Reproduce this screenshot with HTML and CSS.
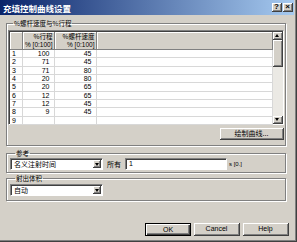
FILE: index.html
```html
<!DOCTYPE html>
<html lang="zh">

<head>
    <meta charset="UTF-8">
    <title>充填控制曲线设置</title>
    <link rel="stylesheet" href="styles.css">
</head>

<body>
    <div class="window">
        <div class="titlebar">
            <span class="title">充填控制曲线设置</span>
            <span class="tbtn">?</span>
            <span class="tbtn">×</span>
        </div>
        <div class="content">
            <fieldset class="group g1">
                <legend>%螺杆速度与%行程</legend>
                <div class="grid">
                    <table>
                        <colgroup>
                            <col class="c0">
                            <col class="c1">
                            <col class="c2">
                            <col>
                        </colgroup>
                        <tr>
                            <th></th>
                            <th><span class="h1">%行程</span><span class="h2">% [0:100]</span></th>
                            <th><span class="h1">%螺杆速度</span><span class="h2">% [0:100]</span></th>
                            <th></th>
                        </tr>
                        <tr><td>1</td><td>100</td><td>45</td><td></td></tr>
                        <tr><td>2</td><td>71</td><td>45</td><td></td></tr>
                        <tr><td>3</td><td>71</td><td>80</td><td></td></tr>
                        <tr><td>4</td><td>20</td><td>80</td><td></td></tr>
                        <tr><td>5</td><td>20</td><td>65</td><td></td></tr>
                        <tr><td>6</td><td>12</td><td>65</td><td></td></tr>
                        <tr><td>7</td><td>12</td><td>45</td><td></td></tr>
                        <tr><td>8</td><td>9</td><td>45</td><td></td></tr>
                        <tr><td>9</td><td></td><td></td><td></td></tr>
                    </table>
                    <div class="vscroll">
                        <span class="sbtn up"></span>
                        <span class="thumb"></span>
                        <span class="track"></span>
                        <span class="sbtn down"></span>
                    </div>
                </div>
                <div class="row-right">
                    <span class="btn draw">绘制曲线...</span>
                </div>
            </fieldset>

            <fieldset class="group g2">
                <legend>参考</legend>
                <div class="line">
                    <div class="combo"><span class="val">名义注射时间</span><span class="drop"></span></div>
                    <span class="lbl">所有</span>
                    <div class="input">1</div>
                    <span class="unit">s [0.]</span>
                </div>
            </fieldset>

            <fieldset class="group g3">
                <legend>射出体积</legend>
                <div class="line">
                    <div class="combo"><span class="val">自动</span><span class="drop"></span></div>
                </div>
            </fieldset>

            <div class="buttons">
                <span class="btn default">OK</span>
                <span class="btn">Cancel</span>
                <span class="btn">Help</span>
            </div>
        </div>
    </div>
</body>

</html>
```

FILE: styles.css
```css
* {
    padding: 0;
    margin: 0;
    box-sizing: border-box;
}

body {
    background-color: #d4d0c8;
    font-family: "Liberation Sans", "Noto Sans CJK SC", sans-serif;
    font-size: 7px;
    color: #000;
}

.window {
    width: 297px;
    height: 242px;
    background-color: #d4d0c8;
    border-right: 1px solid #404040;
    border-bottom: 1px solid #404040;
    box-shadow: inset -1px -1px 0 #808080;
}

.titlebar {
    display: flex;
    align-items: center;
    height: 15px;
    margin-right: 2px;
    padding: 0 1px 0 3px;
    background: linear-gradient(to right, #0a246a, #a6caf0);
}

.title {
    flex: 1;
    color: #fff;
    font-family: "Noto Sans CJK SC", sans-serif;
    font-weight: bold;
    font-size: 8.5px;
    line-height: 10px;
}

.tbtn {
    width: 10px;
    height: 9px;
    margin-left: 1px;
    background-color: #d4d0c8;
    border-right: 1px solid #404040;
    border-bottom: 1px solid #404040;
    box-shadow: inset 1px 1px 0 #fff, inset -1px -1px 0 #808080;
    font-size: 8px;
    font-weight: bold;
    line-height: 8px;
    text-align: center;
}

.content {
    padding: 4px 10px 0 6px;
}

.group {
    border: 1px solid #808080;
    box-shadow: 1px 1px 0 #fff, inset 1px 1px 0 #fff;
    font-family: "Noto Sans CJK SC", sans-serif;
}

.group legend {
    margin-left: 5px;
    padding: 0 1px;
    font-size: 6.5px;
    line-height: 8px;
}

.g1 {
    padding: 3px 1px 5px 1px;
}

.g2 {
    margin-top: 3px;
    padding: 1px 3px 2px 3px;
}

.g3 {
    margin-top: 1px;
    padding: 2px 3px 4px 3px;
}

/* 表格 */
.grid {
    display: flex;
    height: 95px;
    background-color: #fff;
    border-top: 1px solid #808080;
    border-left: 1px solid #808080;
    border-right: 1px solid #fff;
    border-bottom: 1px solid #fff;
    box-shadow: inset 1px 1px 0 #404040;
    padding: 1px 0 0 1px;
}

.grid table {
    flex: 1;
    align-self: flex-start;
    border-collapse: collapse;
    table-layout: fixed;
    font-family: "Liberation Sans", "Noto Sans CJK SC", sans-serif;
}

.c0 {
    width: 12px;
}

.c1 {
    width: 32px;
}

.c2 {
    width: 42px;
}

th {
    height: 17px;
    background-color: #d4d0c8;
    border-right: 1px solid #808080;
    border-bottom: 1px solid #808080;
    box-shadow: inset 1px 1px 0 #fff;
    font-weight: normal;
    text-align: right;
    white-space: nowrap;
    padding-right: 1px;
}

th span {
    display: block;
    height: 8.5px;
    line-height: 8.5px;
}

.h1 {
    font-family: "Noto Sans CJK SC", sans-serif;
    font-size: 6.5px;
}

.h2 {
    font-family: "Liberation Sans", sans-serif;
    font-size: 6.5px;
}

td {
    height: 8.33px;
    border-right: 1px solid #d8d8d8;
    border-bottom: 1px solid #d8d8d8;
    font-size: 7px;
    line-height: 7px;
    text-align: right;
    padding-right: 4px;
}

td:first-child {
    text-align: left;
    padding: 0 0 0 2px;
}

.vscroll {
    display: flex;
    flex-direction: column;
    width: 10px;
}

.sbtn {
    position: relative;
    height: 8px;
    background-color: #d4d0c8;
    border-right: 1px solid #404040;
    border-bottom: 1px solid #404040;
    box-shadow: inset 1px 1px 0 #fff, inset -1px -1px 0 #808080;
}

.sbtn::after {
    content: "";
    position: absolute;
    left: 2px;
    top: 2px;
    border-left: 2.5px solid transparent;
    border-right: 2.5px solid transparent;
}

.up::after {
    border-bottom: 3px solid #000;
}

.down::after {
    border-top: 3px solid #000;
}

.thumb {
    height: 27px;
    background-color: #d4d0c8;
    border-right: 1px solid #404040;
    border-bottom: 1px solid #404040;
    box-shadow: inset 1px 1px 0 #fff, inset -1px -1px 0 #808080;
}

.track {
    flex: 1;
    background-color: #ebe9e4;
}

.row-right {
    display: flex;
    justify-content: flex-end;
    margin-top: 3px;
}

/* 按钮 */
.btn {
    display: block;
    width: 46px;
    height: 13px;
    background-color: #d4d0c8;
    border-right: 1px solid #404040;
    border-bottom: 1px solid #404040;
    box-shadow: inset 1px 1px 0 #fff, inset -1px -1px 0 #808080;
    font-size: 7px;
    line-height: 12px;
    text-align: center;
}

.draw {
    width: 64px;
    height: 12px;
    font-family: "Noto Sans CJK SC", sans-serif;
    line-height: 11px;
}

.default {
    border: 1px solid #000;
    box-shadow: inset 1px 1px 0 #fff, inset -1px -1px 0 #404040, inset -2px -2px 0 #808080;
}

.line {
    display: flex;
    align-items: center;
    height: 12px;
}

.combo {
    display: flex;
    width: 93px;
    height: 12px;
    background-color: #fff;
    border-top: 1px solid #808080;
    border-left: 1px solid #808080;
    border-right: 1px solid #fff;
    border-bottom: 1px solid #fff;
    box-shadow: inset 1px 1px 0 #404040;
    padding: 1px;
}

.combo .val {
    flex: 1;
    padding-left: 2px;
    font-size: 7px;
    line-height: 9px;
}

.combo .drop {
    position: relative;
    width: 8px;
    background-color: #d4d0c8;
    border-right: 1px solid #404040;
    border-bottom: 1px solid #404040;
    box-shadow: inset 1px 1px 0 #fff, inset -1px -1px 0 #808080;
}

.combo .drop::after {
    content: "";
    position: absolute;
    left: 1.5px;
    top: 3px;
    border-left: 2.5px solid transparent;
    border-right: 2.5px solid transparent;
    border-top: 3px solid #000;
}

.lbl {
    margin-left: 4px;
    width: 18px;
    font-size: 7px;
}

.input {
    width: 102px;
    height: 12px;
    background-color: #fff;
    border-top: 1px solid #808080;
    border-left: 1px solid #808080;
    border-right: 1px solid #fff;
    border-bottom: 1px solid #fff;
    box-shadow: inset 1px 1px 0 #404040;
    padding-left: 3px;
    font-family: "Liberation Sans", sans-serif;
    font-size: 7px;
    line-height: 10px;
}

.unit {
    margin-left: 2px;
    font-family: "Liberation Sans", sans-serif;
    font-size: 6px;
}

.buttons {
    display: flex;
    justify-content: flex-end;
    gap: 3px;
    margin-top: 22px;
    margin-right: -3px;
}
```
